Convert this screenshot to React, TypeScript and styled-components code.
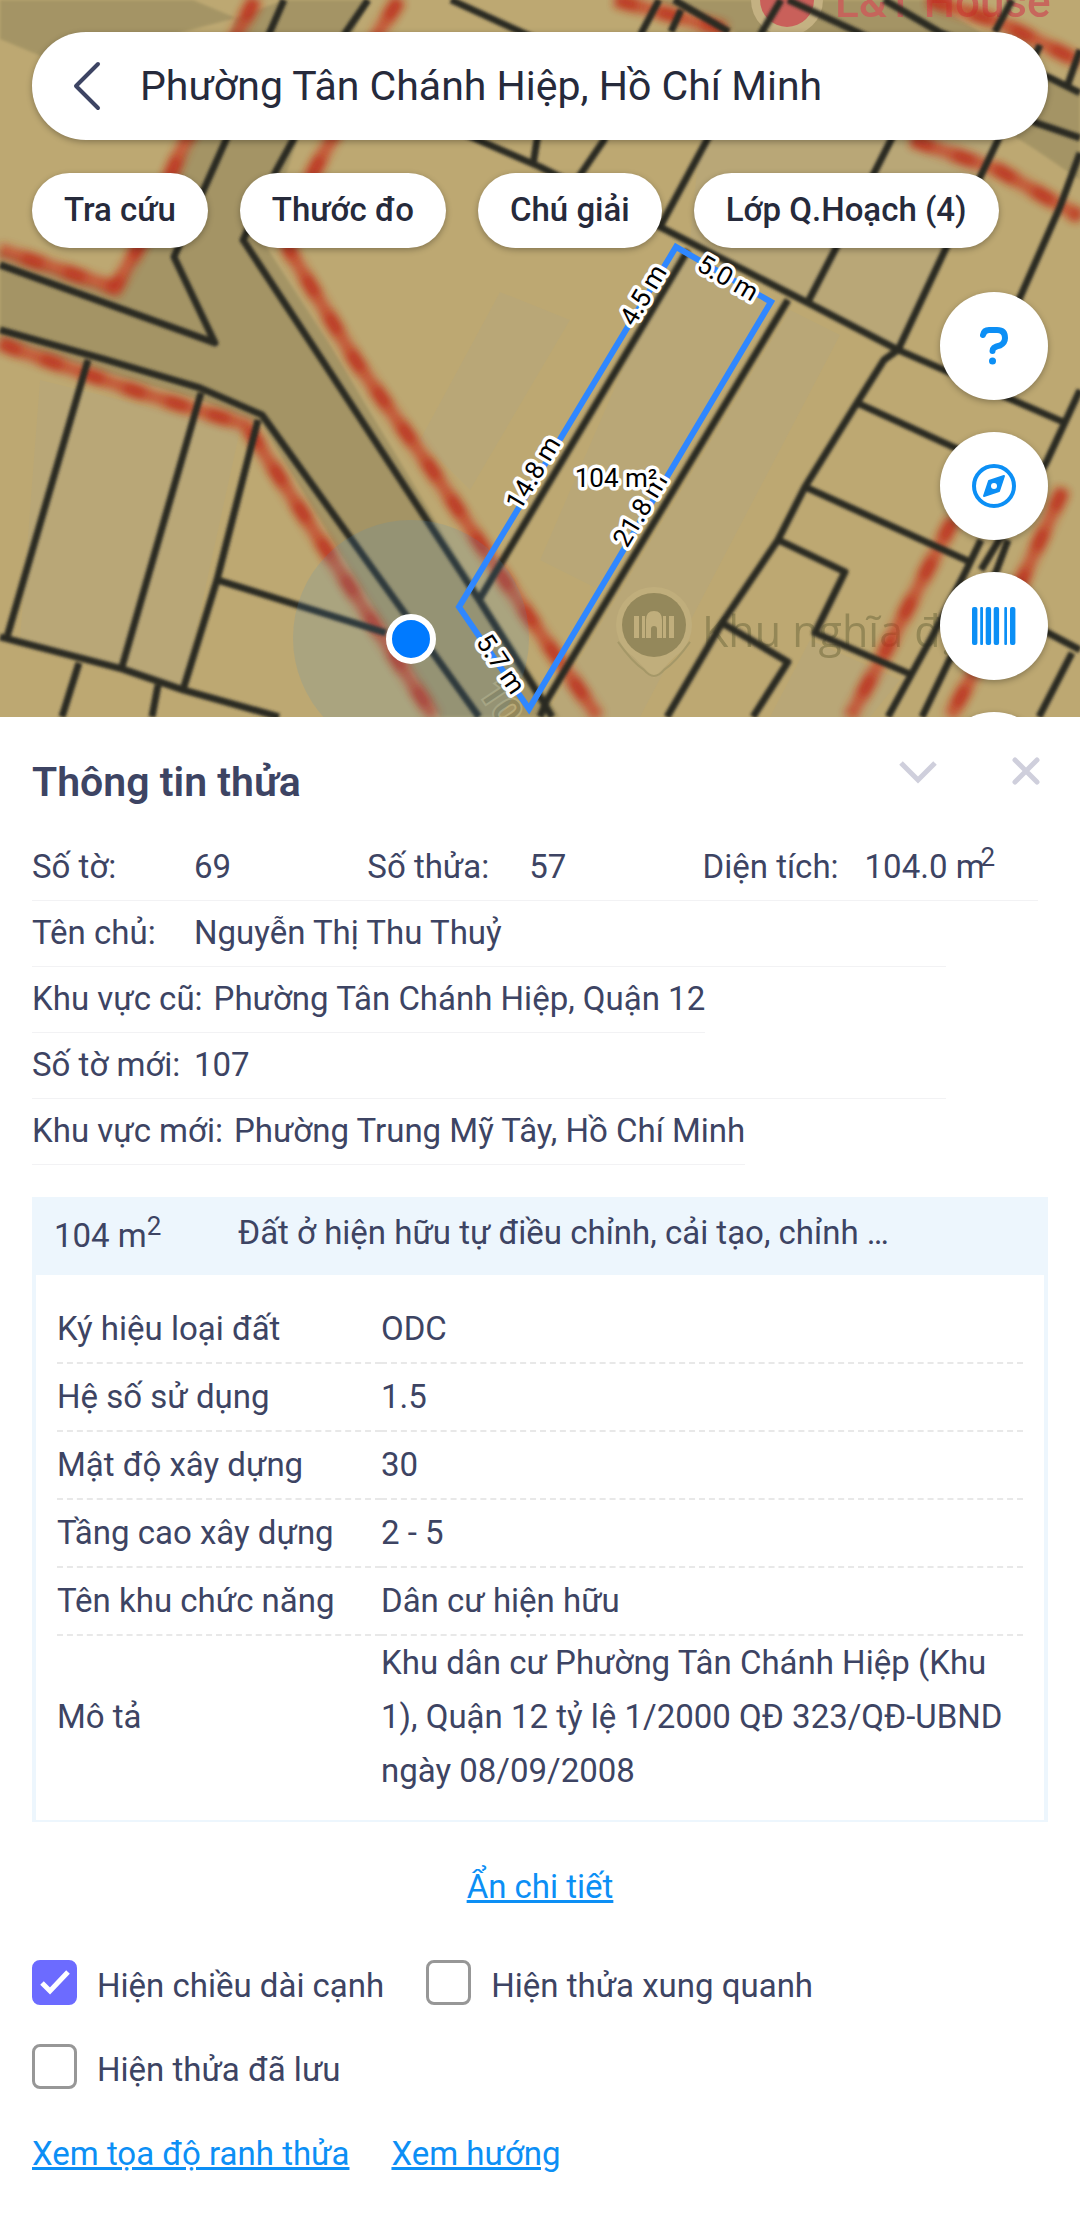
import React, { useState } from "react";
import styled, { createGlobalStyle, css } from "styled-components";

const colors = {
  ink: "#262a3b",
  text: "#3d4463",
  blue: "#0c8ff5",
  parcel: "#2f87ff",
  violet: "#6c6bff",
  muted: "#cfcfdc",
  line: "#f2f2f4",
  panel: "#edf6fd",
  land: "#bda872",
  landAlt: "#b9a777",
  road: "#a49465",
};

const GlobalStyle = createGlobalStyle`
  * {
    box-sizing: border-box;
  }

  body {
    margin: 0;
    background: #fff;
    color: ${colors.text};
    font-family: Roboto, "Liberation Sans", sans-serif;
    font-size: 33px;
    line-height: 54px;
  }

  button,
  input {
    font: inherit;
    color: inherit;
  }
`;

const Page = styled.div`
  display: flex;
  flex-direction: column;
  min-height: 100vh;
`;

const MapArea = styled.section`
  position: relative;
  height: 32vh;
  overflow: hidden;
  background: ${colors.land};
`;

const MapCanvas = styled.svg`
  position: absolute;
  inset: 0;
  width: 100%;
  height: 100%;
`;

const MapControls = styled.div`
  position: relative;
  display: flex;
  flex-direction: column;
  padding: 32px;
`;

const floating = css`
  border: 0;
  background: #fff;
  box-shadow: 0 2px 6px rgba(0, 0, 0, 0.3);
`;

const SearchBar = styled.div`
  ${floating}
  display: flex;
  align-items: center;
  height: 108px;
  padding: 0 32px;
  border-radius: 54px;
`;

const BackButton = styled.button`
  display: flex;
  padding: 0;
  border: 0;
  background: none;
  cursor: pointer;
`;

const SearchInput = styled.input`
  flex: 1;
  min-width: 0;
  margin-left: 30px;
  padding: 0;
  border: 0;
  outline: 0;
  background: none;
  color: ${colors.ink};
  font-size: 41px;
`;

const ChipRow = styled.div`
  display: flex;
  gap: 32px;
  margin-top: 33px;
`;

const Chip = styled.button`
  ${floating}
  height: 75px;
  padding: 0 32px 2px;
  border-radius: 38px;
  color: ${colors.ink};
  font-weight: 500;
  white-space: nowrap;
  cursor: pointer;
`;

const FabColumn = styled.div`
  display: flex;
  flex-direction: column;
  align-items: flex-end;
  gap: 32px;
  margin-top: 44px;
`;

const Fab = styled.button`
  ${floating}
  display: flex;
  align-items: center;
  justify-content: center;
  flex-shrink: 0;
  width: 108px;
  height: 108px;
  padding: 0;
  border-radius: 50%;
  color: ${colors.blue};
  cursor: pointer;
`;

const Sheet = styled.main`
  flex: 1;
  padding: 32px;
`;

const SheetHeader = styled.header`
  display: flex;
  align-items: flex-start;
  justify-content: space-between;
  margin-bottom: 26px;
`;

const Title = styled.h1`
  margin: 6px 0 0;
  font-size: 41px;
  font-weight: 600;
  line-height: 54px;
`;

const SheetActions = styled.div`
  display: flex;
  gap: 62px;
`;

const IconButton = styled.button`
  display: flex;
  padding: 0;
  border: 0;
  background: none;
  color: ${colors.muted};
  cursor: pointer;
`;

const FactList = styled.dl`
  margin: 0 0 32px;
`;

const FactRow = styled.div<{ $width?: string }>`
  display: flex;
  width: ${(props) => props.$width ?? "fit-content"};
  padding: 5px 0 6px;
  border-bottom: 1px solid ${colors.line};
`;

const Fact = styled.div`
  display: flex;
  flex: 1;
`;

const FactLabel = styled.dt`
  min-width: 162px;
  padding-right: 11px;
  white-space: nowrap;
`;

const FactValue = styled.dd`
  margin: 0;
  white-space: nowrap;
`;

const Sup = styled.sup<{ $tight?: boolean }>`
  margin-left: ${(props) => (props.$tight ? "-4px" : "0")};
  font-size: 26px;
  line-height: 0;
  vertical-align: 12px;
`;

const DetailCard = styled.section`
  border: solid ${colors.panel};
  border-width: 2px 4px;
`;

const DetailHead = styled.h2`
  display: flex;
  margin: 0;
  padding: 10px 18px 12px;
  background: ${colors.panel};
  font-size: 33px;
  font-weight: 400;
`;

const DetailArea = styled.span`
  flex: 0 0 184px;
`;

const DetailName = styled.span`
  overflow: hidden;
  line-height: 48px;
  text-overflow: ellipsis;
  white-space: nowrap;
`;

const DetailBody = styled.div`
  padding: 21px 21px 22px;
`;

const DetailTable = styled.table`
  width: 100%;
  border-collapse: collapse;

  tr:not(:last-child) > * {
    border-bottom: 2px dashed #e8e8e8;
  }
`;

const DetailLabel = styled.th`
  width: 324px;
  padding: 6px 0;
  font-weight: 400;
  text-align: left;
`;

const DetailValue = styled.td<{ $long?: boolean }>`
  padding: ${(props) => (props.$long ? "0" : "6px 0")};
`;

const TextLink = styled.a`
  color: ${colors.blue};
  text-decoration: underline;
`;

const Centered = styled.div`
  margin: 38px 0 45px;
  text-align: center;
`;

const OptionList = styled.div`
  display: flex;
  flex-wrap: wrap;
  gap: 30px 42px;
`;

const Option = styled.label`
  display: flex;
  align-items: center;
  gap: 20px;
  cursor: pointer;
`;

const CheckInput = styled.input`
  appearance: none;
  width: 45px;
  height: 45px;
  margin: 0;
  border: 3px solid #979797;
  border-radius: 8px;
  background: #fff;

  &:checked {
    border-color: ${colors.violet};
    background: ${colors.violet};
  }
`;

const CheckBox = styled.span`
  display: grid;
  margin-bottom: 7px;

  > * {
    grid-area: 1 / 1;
  }

  svg {
    place-self: center;
    pointer-events: none;
  }
`;

const LinkRow = styled.nav`
  display: flex;
  gap: 42px;
  margin-top: 30px;
`;

const ROADS = [
  "M0 0H193L236 18L190 140L117 292L0 250V340L103 372L200 400L262 425L440 717H560L459 560L330 345L262 240L298 140L370 0H284L236 18L60 64L0 39Z",
  "M655 0H929L1080 95V180L1036 150L940 90L800 30L740 34Z",
];

const RED_LINES = [
  "M255 0L238 32L186 140L138 248L115 288L0 250",
  "M399 0L379 32L331 140L313 173L286 228L289 250L355 360L430 467L489 557L540 633L598 717",
  "M0 343L17 350L138 392L246 425L296 503L434 717",
  "M616 0L726 30",
  "M929 0L1001 23L1080 62",
  "M912 140L998 170L1080 217",
  "M953 520L881 660L850 717",
  "M1063 490L1022 580L970 680L950 717",
];

const BLACK_LINES = [
  "M284 0L270 32L226 140L205 187L174 257L215 343L0 265",
  "M368 0L346 32L293 140L275 173L243 240L322 360L479 600L545 705L552 717",
  "M0 330L103 359L200 388L262 415L479 717",
  "M88 360L7 637",
  "M201 393L122 667",
  "M258 420L217 580L183 690",
  "M0 637L122 669L183 690L279 717",
  "M79 663L62 717",
  "M158 685L152 717",
  "M217 580L386 633",
  "M479 600L688 250",
  "M788 300L547 700L540 717",
  "M451 0L560 50L537 140L533 165",
  "M455 130L540 167L660 227L808 303L898 350L1063 422",
  "M659 0L642 32L604 140L570 190",
  "M681 10L671 32",
  "M674 0L729 32",
  "M781 0L762 32L707 140L660 227",
  "M788 0L857 32L1036 123L1080 138",
  "M884 0L939 32L1050 78L1080 93",
  "M1012 0L995 32",
  "M1080 50L1067 87",
  "M940 45L891 140L836 248L809 300",
  "M1040 45L998 140L946 248L898 350L884 360L857 403L805 487L778 540L722 623L667 717",
  "M1080 153L1060 207L1022 293L990 360",
  "M857 403L953 447L1040 485",
  "M805 487L970 562",
  "M778 540L845 572L815 633L912 675",
  "M722 623L788 662L753 717",
  "M1080 390L1046 463L981 570",
  "M1008 540L996 572L948 663L922 717",
  "M981 540L965 573L932 637L888 717",
  "M1000 610L1048 633L1080 650",
  "M1072 653L1039 717",
];

const EDGE_LABELS = [
  { text: "4.5 m", x: 643, y: 295, angle: -59 },
  { text: "5.0 m", x: 728, y: 278, angle: 30 },
  { text: "14.8 m", x: 533, y: 473, angle: -59 },
  { text: "21.8 m", x: 640, y: 510, angle: -59 },
  { text: "5.7 m", x: 501, y: 664, angle: 56 },
  { text: "104 m²", x: 616, y: 478, angle: 0 },
];

const ParcelMap = () => (
  <MapCanvas
    viewBox="0 0 1080 717"
    preserveAspectRatio="xMidYMid slice"
    fontFamily="Roboto, sans-serif"
    aria-hidden
  >
    <defs>
      <filter id="soft" x="-5%" y="-5%" width="110%" height="110%">
        <feGaussianBlur stdDeviation="4" />
      </filter>
      <filter id="edge" x="-5%" y="-5%" width="110%" height="110%">
        <feGaussianBlur stdDeviation="1.6" />
      </filter>
    </defs>

    <g fill={colors.landAlt}>
      <path d="M40 380L240 430L183 690L20 640Z" />
      <path d="M500 292L570 320L470 490L420 440Z" />
      <path d="M676 247L771 302L600 590L540 560Z" />
      <path d="M790 310L840 335L640 717H545Z" />
      <path d="M700 140H1000L900 350L690 240Z" />
      <path d="M810 640L900 680L870 717H770Z" />
    </g>
    <g fill={colors.road} filter="url(#edge)">
      {ROADS.map((d) => (
        <path key={d} d={d} />
      ))}
    </g>

    <g>
      <circle cx="654" cy="625" r="38" fill="#c0ae7c" />
      <path d="M622 645L654 678L686 645Z" fill="#c0ae7c" />
      <path
        d="M618 642Q632 662 644 670Q654 682 664 670Q676 662 690 642"
        fill="none"
        stroke="#a59868"
        strokeWidth="2"
      />
      <circle cx="654" cy="625" r="32" fill="#94885b" />
      <path
        d="M634 616h5v22h-5zM642 616h3v22h-3zM663 616h3v22h-3zM669 616h5v22h-5zM646 638v-18q0-9 8-9t8 9v18h-5v-9q0-3-3-3t-3 3v9z"
        fill="#c0ae7c"
      />
      <text
        x="702"
        y="647"
        fontFamily="'Open Sans', Roboto, sans-serif"
        fontSize="43"
        fontWeight="500"
        fill="#8a7f50"
        opacity="0.8"
      >
        Khu nghĩa địa
      </text>
    </g>
    <g fill="#c9605a">
      <circle cx="787" cy="0" r="36" fill="#c4b182" />
      <circle cx="787" cy="0" r="27" />
      <text x="835" y="17" fontSize="44" fontWeight="500" opacity="0.9">
        L&amp;T House
      </text>
    </g>
    <text
      x="478"
      y="692"
      fontSize="38"
      fontWeight="500"
      fill="#93875a"
      stroke="#b8aa78"
      strokeWidth="4"
      paintOrder="stroke"
      transform="rotate(56 478 692)"
    >
      10
    </text>

    <g
      fill="none"
      stroke="#c8341e"
      strokeWidth="13"
      opacity="0.7"
      filter="url(#soft)"
    >
      {RED_LINES.map((d) => (
        <path key={d} d={d} />
      ))}
    </g>
    <g
      fill="none"
      stroke="#b82816"
      strokeWidth="11"
      strokeDasharray="22 22"
      opacity="0.65"
      filter="url(#soft)"
    >
      {RED_LINES.map((d) => (
        <path key={d} d={d} />
      ))}
    </g>
    <g
      fill="none"
      stroke="#2a2a24"
      strokeWidth="7"
      strokeLinejoin="round"
      filter="url(#edge)"
    >
      {BLACK_LINES.map((d) => (
        <path key={d} d={d} />
      ))}
    </g>

    <circle cx="411" cy="638" r="118" fill="#4a90c8" opacity="0.16" />
    <circle
      cx="411"
      cy="639"
      r="22"
      fill="#007aff"
      stroke="#fff"
      strokeWidth="6"
    />

    <path
      d="M676 247L771 302L529 709L459 607Z"
      fill="none"
      stroke={colors.parcel}
      strokeWidth="6"
    />
    <g
      fontSize="26"
      fill="#000"
      stroke="#fff"
      strokeWidth="7"
      strokeLinejoin="round"
      paintOrder="stroke"
      textAnchor="middle"
    >
      {EDGE_LABELS.map(({ text, x, y, angle }) => (
        <text
          key={text}
          x={x}
          y={y}
          dy="9"
          transform={`rotate(${angle} ${x} ${y})`}
        >
          {text}
        </text>
      ))}
    </g>
  </MapCanvas>
);

const ChevronLeftIcon = () => (
  <svg width="46" height="54" viewBox="0 0 46 54" fill="none">
    <path
      d="M34 5L12 27L34 49"
      stroke={colors.text}
      strokeWidth="4"
      strokeLinecap="round"
      strokeLinejoin="round"
    />
  </svg>
);

const HelpIcon = () => (
  <svg width="44" height="44" viewBox="0 0 44 44" fill="none">
    <path
      d="M11 11Q12 6 17 6H25Q33 6 33 14Q33 19 28 21.5Q20.5 23 20.5 27"
      stroke="currentColor"
      strokeWidth="6"
      strokeLinecap="round"
    />
    <circle cx="20.5" cy="37" r="3.5" fill="currentColor" />
  </svg>
);

const CompassIcon = () => (
  <svg width="44" height="44" viewBox="0 0 44 44" fill="none">
    <circle cx="22" cy="22" r="20" stroke="currentColor" strokeWidth="4" />
    <path
      d="M32 12L27 27L12 32L17 17Z"
      fill="currentColor"
      stroke="currentColor"
      strokeWidth="2"
      strokeLinejoin="round"
    />
    <circle cx="22" cy="22" r="3" fill="#fff" />
  </svg>
);

const BarcodeIcon = () => (
  <svg width="44" height="40" viewBox="0 0 44 40" fill="currentColor">
    <rect x="0" y="1" width="5.4" height="38" rx="2" />
    <rect x="8.2" y="1" width="2.8" height="38" rx="1" />
    <rect x="13.7" y="1" width="5.4" height="38" rx="2" />
    <rect x="21.7" y="1" width="5.4" height="38" rx="2" />
    <rect x="32.3" y="1" width="2.7" height="38" rx="1" />
    <rect x="38" y="1" width="5.4" height="38" rx="2" />
  </svg>
);

const ChevronDownIcon = () => (
  <svg width="48" height="44" viewBox="0 0 48 44" fill="none">
    <path d="M7 14L24 31L41 14" stroke="currentColor" strokeWidth="5" />
  </svg>
);

const CloseIcon = () => (
  <svg width="44" height="44" viewBox="0 0 44 44" fill="none">
    <path
      d="M11 11L33 33M33 11L11 33"
      stroke="currentColor"
      strokeWidth="5"
      strokeLinecap="round"
    />
  </svg>
);

const CheckIcon = () => (
  <svg width="45" height="45" viewBox="0 0 45 45" fill="none">
    <path d="M10 23L18 31L36 12" stroke="#fff" strokeWidth="5" />
  </svg>
);

const CHIPS = ["Tra cứu", "Thước đo", "Chú giải", "Lớp Q.Hoạch (4)"];

const DETAILS = [
  { label: "Ký hiệu loại đất", value: "ODC" },
  { label: "Hệ số sử dụng", value: "1.5" },
  { label: "Mật độ xây dựng", value: "30" },
  { label: "Tầng cao xây dựng", value: "2 - 5" },
  { label: "Tên khu chức năng", value: "Dân cư hiện hữu" },
  {
    label: "Mô tả",
    value:
      "Khu dân cư Phường Tân Chánh Hiệp (Khu 1), Quận 12 tỷ lệ 1/2000 QĐ 323/QĐ-UBND ngày 08/09/2008",
    long: true,
  },
];

const OPTIONS = [
  { id: "edges", label: "Hiện chiều dài cạnh" },
  { id: "nearby", label: "Hiện thửa xung quanh" },
  { id: "saved", label: "Hiện thửa đã lưu" },
];

const App: React.FC = () => {
  const [place, setPlace] = useState("Phường Tân Chánh Hiệp, Hồ Chí Minh");
  const [checked, setChecked] = useState<Record<string, boolean>>({
    edges: true,
  });

  const toggle = (id: string) =>
    setChecked((prev) => ({ ...prev, [id]: !prev[id] }));

  return (
    <Page>
      <GlobalStyle />
      <MapArea>
        <ParcelMap />
        <MapControls>
          <SearchBar>
            <BackButton aria-label="Quay lại">
              <ChevronLeftIcon />
            </BackButton>
            <SearchInput
              aria-label="Khu vực"
              value={place}
              onChange={(e) => setPlace(e.target.value)}
            />
          </SearchBar>
          <ChipRow>
            {CHIPS.map((chip) => (
              <Chip key={chip}>{chip}</Chip>
            ))}
          </ChipRow>
          <FabColumn>
            <Fab aria-label="Trợ giúp">
              <HelpIcon />
            </Fab>
            <Fab aria-label="La bàn">
              <CompassIcon />
            </Fab>
            <Fab aria-label="Mã vạch">
              <BarcodeIcon />
            </Fab>
            <Fab aria-label="Thêm" />
          </FabColumn>
        </MapControls>
      </MapArea>

      <Sheet>
        <SheetHeader>
          <Title>Thông tin thửa</Title>
          <SheetActions>
            <IconButton aria-label="Thu gọn">
              <ChevronDownIcon />
            </IconButton>
            <IconButton aria-label="Đóng">
              <CloseIcon />
            </IconButton>
          </SheetActions>
        </SheetHeader>

        <FactList>
          <FactRow $width="99%">
            <Fact>
              <FactLabel>Số tờ:</FactLabel>
              <FactValue>69</FactValue>
            </Fact>
            <Fact>
              <FactLabel>Số thửa:</FactLabel>
              <FactValue>57</FactValue>
            </Fact>
            <Fact>
              <FactLabel>Diện tích:</FactLabel>
              <FactValue>
                104.0 m<Sup $tight>2</Sup>
              </FactValue>
            </Fact>
          </FactRow>
          <FactRow $width="90%">
            <FactLabel>Tên chủ:</FactLabel>
            <FactValue>Nguyễn Thị Thu Thuỷ</FactValue>
          </FactRow>
          <FactRow>
            <FactLabel>Khu vực cũ:</FactLabel>
            <FactValue>Phường Tân Chánh Hiệp, Quận 12</FactValue>
          </FactRow>
          <FactRow $width="90%">
            <FactLabel>Số tờ mới:</FactLabel>
            <FactValue>107</FactValue>
          </FactRow>
          <FactRow>
            <FactLabel>Khu vực mới:</FactLabel>
            <FactValue>Phường Trung Mỹ Tây, Hồ Chí Minh</FactValue>
          </FactRow>
        </FactList>

        <DetailCard>
          <DetailHead>
            <DetailArea>
              104 m<Sup>2</Sup>
            </DetailArea>
            <DetailName>Đất ở hiện hữu tự điều chỉnh, cải tạo, chỉnh …</DetailName>
          </DetailHead>
          <DetailBody>
            <DetailTable>
              <tbody>
                {DETAILS.map(({ label, value, long }) => (
                  <tr key={label}>
                    <DetailLabel scope="row">{label}</DetailLabel>
                    <DetailValue $long={long}>{value}</DetailValue>
                  </tr>
                ))}
              </tbody>
            </DetailTable>
          </DetailBody>
        </DetailCard>

        <Centered>
          <TextLink href="#details">Ẩn chi tiết</TextLink>
        </Centered>

        <OptionList>
          {OPTIONS.map(({ id, label }) => (
            <Option key={id} htmlFor={id}>
              <CheckBox>
                <CheckInput
                  id={id}
                  type="checkbox"
                  checked={!!checked[id]}
                  onChange={() => toggle(id)}
                />
                {checked[id] && <CheckIcon />}
              </CheckBox>
              {label}
            </Option>
          ))}
        </OptionList>

        <LinkRow>
          <TextLink href="#coordinates">Xem tọa độ ranh thửa</TextLink>
          <TextLink href="#direction">Xem hướng</TextLink>
        </LinkRow>
      </Sheet>
    </Page>
  );
};

export default App;
